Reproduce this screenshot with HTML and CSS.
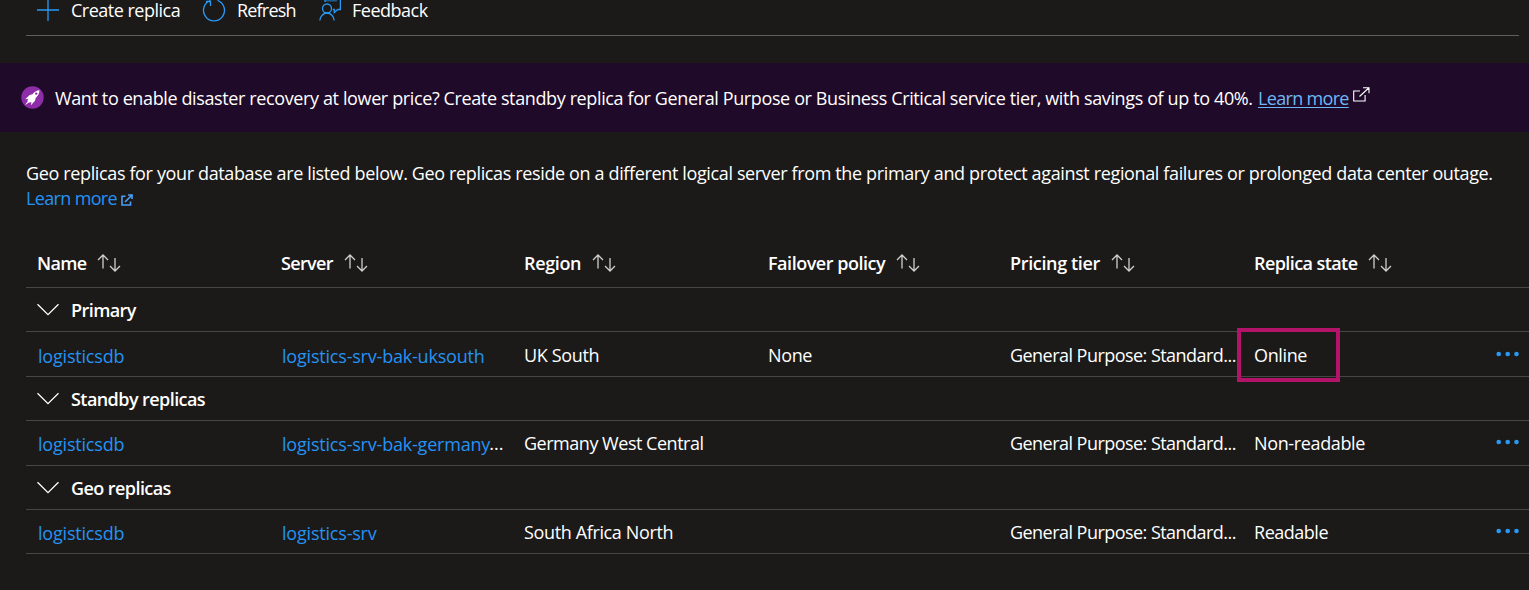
FILE: index.html
```
<!DOCTYPE html>
<html lang="en">
<head>
<meta charset="utf-8">
<title>Replicas</title>
<link rel="stylesheet" href="styles.css">
</head>
<body>
<svg class="defs" aria-hidden="true">
  <symbol id="sort" viewBox="0 0 24 20"><path d="M6 15.500V2M1 7l5-5 5 5M18 5v13M13 13l5 5 5-5"/></symbol>
  <symbol id="chevron" viewBox="0 0 24 14"><path d="M1.500 1.200L12 11.600 22.500 1.200"/></symbol>
  <symbol id="dots" viewBox="0 0 24 6"><circle cx="2.700" cy="3" r="2.300"/><circle cx="11.700" cy="3" r="2.300"/><circle cx="20.500" cy="3" r="2.300"/></symbol>
</svg>
<nav class="toolbar">
  <button class="command create"><svg width="22" height="22" viewBox="0 0 22 22"><path d="M0 11h22M11 0v22"/></svg><span>Create replica</span></button>
  <button class="command refresh"><svg width="24" height="24" viewBox="0 0 24 24"><path d="M8.500 2.400A10.500 10.500 0 1 0 15.500 2.400M4 3.500h4.500V8"/></svg><span>Refresh</span></button>
  <button class="command feedback"><svg width="22" height="24" viewBox="0 0 22 24"><path class="bubble" d="M6 0v4.500h12V0z"/><path d="M6 5V1M21.400 1v11.500h-2.700l-3.400 3v-3h-1.500"/><circle cx="8" cy="11.500" r="4.500"/><path d="M.8 23.500c.2-4.200 3.500-7.500 7.200-7.500s7 3.300 7.200 7.500"/></svg><span>Feedback</span></button>
</nav>
<section class="banner">
  <svg class="rocket" width="23" height="23" viewBox="0 0 23 23"><circle cx="11.500" cy="11.500" r="11.200" fill="#8e2da8"/><path fill="#fff" d="M18.500 4.300c-2.800.2-5 1.500-7 3.900L8.700 9l-4.500 4.300 3.300-.6-1.200 1.700.6.600-3 4.200 4.300-3 .6.600 1.600-1-.5 3.400 4.100-4.500.7-2.700c2.300-2.200 3.700-4.700 3.800-7.700z"/><circle cx="15.200" cy="7.600" r="1.200" fill="#8e2da8"/></svg>
  <p class="banner-text">Want to enable disaster recovery at lower price? Create standby replica for General Purpose or Business Critical service tier, with savings of up to 40%.</p>
  <a class="banner-link">Learn more</a>
  <svg class="external" width="17" height="16" viewBox="0 0 17 16"><path d="M7 4H.7v10h11.400V8M6.500 9.500L15.700 1M10 .7h6v5.500"/></svg>
</section>
<main class="content">
  <p class="intro">Geo replicas for your database are listed below. Geo replicas reside on a different logical server from the primary and protect against regional failures or prolonged data center outage.</p>
  <p class="more"><a class="link">Learn more</a><svg width="12" height="12" viewBox="0 0 12 12"><path d="M4.500 2.200H1v8.800h8.500V7.500M4 8l6.500-6.500M7 1h4v4"/></svg></p>
  <div class="grid">
    <div class="row header">
      <div><span>Name</span><svg><use href="#sort"/></svg></div>
      <div><span>Server</span><svg><use href="#sort"/></svg></div>
      <div class="region"><span>Region</span><svg><use href="#sort"/></svg></div>
      <div class="failover"><span>Failover policy</span><svg><use href="#sort"/></svg></div>
      <div class="pricing"><span>Pricing tier</span><svg><use href="#sort"/></svg></div>
      <div class="state"><span>Replica state</span><svg><use href="#sort"/></svg></div>
    </div>
    <div class="group"><svg><use href="#chevron"/></svg><span>Primary</span></div>
    <div class="row">
      <div><a class="link">logisticsdb</a></div><div><a class="link">logistics-srv-bak-uksouth</a></div><div>UK South</div><div>None</div><div class="tier">General Purpose: Standard...</div><div class="marked">Online</div><svg class="dots"><use href="#dots"/></svg>
    </div>
    <div class="group"><svg><use href="#chevron"/></svg><span>Standby replicas</span></div>
    <div class="row standby">
      <div><a class="link">logisticsdb</a></div><div><a class="link">logistics-srv-bak-germany</a><span class="ellipsis">...</span></div><div class="germany">Germany West Central</div><div></div><div class="tier">General Purpose: Standard...</div><div>Non-readable</div><svg class="dots"><use href="#dots"/></svg>
    </div>
    <div class="group"><svg><use href="#chevron"/></svg><span>Geo replicas</span></div>
    <div class="row last">
      <div><a class="link">logisticsdb</a></div><div><a class="link">logistics-srv</a></div><div>South Africa North</div><div></div><div class="tier">General Purpose: Standard...</div><div class="readable">Readable</div><svg class="dots"><use href="#dots"/></svg>
    </div>
  </div>
</main>
</body>
</html>
```
FILE: styles.css
```
*, *::after { box-sizing: border-box; }
body {
  margin: 0;
  height: 590px;
  overflow: hidden;
  background: #1b1a19;
  color: #fff;
  font: 18px/25px "Segoe UI", "Open Sans", "Noto Sans", sans-serif;
  letter-spacing: -0.363px;
  white-space: nowrap;
}
p { margin: 0; }
svg { flex: none; fill: none; stroke: #2899f5; stroke-width: 1.3; }
.defs { position: absolute; width: 0; height: 0; }
.toolbar {
  display: flex;
  align-items: center;
  height: 36px;
  margin: 0 10px 27px 26px;
  padding: 0 0 15px 11px;
  border-bottom: 1px solid #605e5c;
}
.command {
  display: flex;
  align-items: center;
  padding: 0;
  border: 0;
  background: none;
  color: inherit;
  font: inherit;
  letter-spacing: -0.5px;
}
.create { width: 165px; gap: 12px; }
.refresh { width: 117px; gap: 11px; letter-spacing: -0.8px; }
.feedback { gap: 11px; }
.command svg { margin-bottom: 1px; }
.feedback svg { margin-bottom: 2px; }
.feedback .bubble { fill: #1c5c91; stroke: none; }
.banner {
  display: flex;
  align-items: center;
  height: 69px;
  padding-left: 21px;
  background: #200a29;
}
.rocket { stroke: none; }
.banner-text { margin-left: 11px; padding-top: 2px; width: 1203px; letter-spacing: -0.379px; }
.banner-link { padding-top: 2px; color: #6cb8f6; text-decoration: underline; text-underline-offset: 2px; width: 91px; letter-spacing: -0.68px; }
.external { stroke: #fff; stroke-width: 1.1; margin: 0 0 6px 4px; }
.content { padding: 29px 0 0 26px; }
.more { display: flex; align-items: center; gap: 4px; height: 25px; letter-spacing: -0.65px; }
.link { color: #2492f3; }
.more .link { width: 91px; }
.more svg { stroke-width: 1.6; stroke: #4ba0f5; margin-top: 2px; }
.grid { margin-top: 26px; }
.row {
  display: grid;
  grid-template-columns: 244px 243px 244px 242px 244px 242px 25px;
  align-items: center;
  height: 45px;
  padding: 2px 0 0 11px;
  border-bottom: 1px solid #484644;
}
.standby { padding-top: 1px; }
.last { height: 44px; }
.row > div { min-width: 0; }
.row .tier { letter-spacing: -0.54px; }
.germany, .readable { letter-spacing: -0.48px; }
.header { height: 51px; padding-top: 2px; font-weight: 600; letter-spacing: -0.65px; }
.header .region, .header .pricing { letter-spacing: -0.35px; }
.header .failover { letter-spacing: -0.47px; }
.header .state { letter-spacing: -0.58px; }
.header div { display: flex; align-items: center; gap: 11px; }
.header svg { width: 24px; height: 20px; stroke: #d0cfce; }
.row .link { position: relative; top: 1px; left: 1px; letter-spacing: -0.2px; }
.ellipsis { letter-spacing: 0; }
.group {
  display: flex;
  align-items: center;
  gap: 11px;
  height: 44px;
  padding: 2px 0 0 10px;
  border-bottom: 1px solid #484644;
  font-weight: 600;
  letter-spacing: -0.57px;
}
.group svg { width: 24px; height: 14px; margin-bottom: 2px; stroke: #fff; }
.row .dots { width: 24px; height: 6px; margin: 0 0 3px; fill: #2899f5; stroke: none; }
.marked { position: relative; }
.marked::after {
  content: "";
  position: absolute;
  left: -17px;
  top: -15px;
  width: 103px;
  height: 54px;
  border: 4px solid #b4136a;
}
```
